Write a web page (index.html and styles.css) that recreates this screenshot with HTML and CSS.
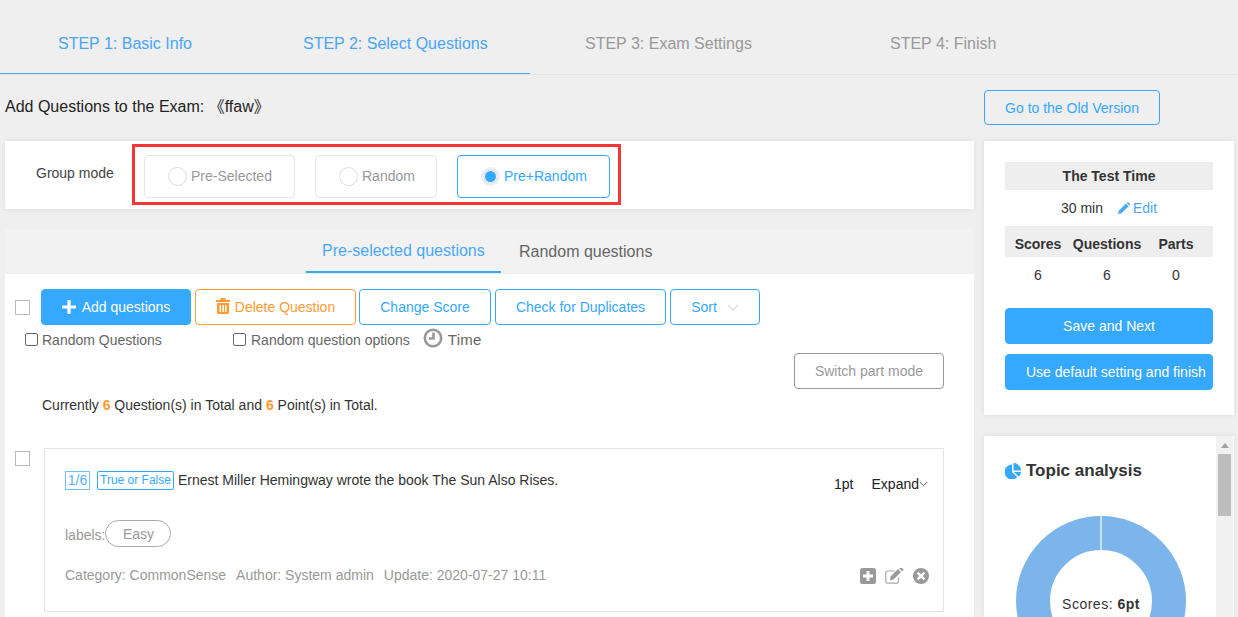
FILE: index.html
```html
<!DOCTYPE html>
<html lang="en">
<head>
<meta charset="utf-8">
<title>Add Questions</title>
<link rel="stylesheet" href="styles.css">
</head>
<body>
<nav class="steps">
  <div class="step step-1 on">STEP 1: Basic Info</div>
  <div class="step step-2 on">STEP 2: Select Questions</div>
  <div class="step step-3">STEP 3: Exam Settings</div>
  <div class="step step-4">STEP 4: Finish</div>
</nav>
<div class="main">
  <div class="left">
    <h1 class="title">Add Questions to the Exam: 《ffaw》</h1>
    <section class="group-card">
      <div class="group-label">Group mode</div>
      <div class="red-box">
        <div class="opt opt-a"><span class="radio"></span>Pre-Selected</div>
        <div class="opt opt-b"><span class="radio"></span>Random</div>
        <div class="opt opt-c active"><span class="radio"></span>Pre+Random</div>
      </div>
    </section>
    <section class="tabs-card">
      <div class="tabs">
        <div class="tab active">Pre-selected questions</div>
        <div class="tab">Random questions</div>
      </div>
      <div class="tab-body">
        <div class="toolbar">
          <span class="box-check"></span>
          <button class="btn primary w-add"><svg class="ic-plus" viewBox="0 0 14 14"><path d="M5.4 0h3.2v5.4H14v3.2H8.6V14H5.4V8.6H0V5.4h5.4z"/></svg>Add questions</button>
          <button class="btn orange w-del"><svg class="ic-trash" viewBox="0 0 14 16"><path d="M5 0h4l1 2h4v2H0V2h4zM1 5h12v9.500c0 .8-.7 1.500-1.500 1.500h-9C1.700 16 1 15.300 1 14.500zm2.500 2v7h1.500V7zm2.800 0v7h1.500V7zm2.700 0v7h1.500V7z"/></svg>Delete Question</button>
          <button class="btn outline w-score">Change Score</button>
          <button class="btn outline w-dup">Check for Duplicates</button>
          <button class="btn outline w-sort">Sort<svg class="ic-sort" viewBox="0 0 12 7"><path d="M1 1l5 5 5-5"/></svg></button>
        </div>
        <div class="checks">
          <label class="check first"><span class="mini"></span>Random Questions</label>
          <label class="check second"><span class="mini"></span>Random question options</label>
          <svg class="ic-clock" viewBox="0 0 20 20"><circle cx="10" cy="10" r="8.200"/><path d="M10.500 4.500v6H6"/></svg>
          <span class="time">Time</span>
        </div>
        <div class="switch-row"><button class="btn grey w-switch">Switch part mode</button></div>
        <p class="summary">Currently <b>6</b> Question(s) in Total and <b>6</b> Point(s) in Total.</p>
        <div class="q-row">
          <span class="box-check q-check"></span>
          <article class="q-box">
            <div class="q-head">
              <div class="q-text"><span class="tag tag-num">1/6</span><span class="tag tag-type">True or False</span>Ernest Miller Hemingway wrote the book The Sun Also Rises.</div>
              <div class="q-side"><span class="pt">1pt</span><span>Expand</span><svg class="ic-exp" viewBox="0 0 9 6"><path d="M.8 1l3.700 3.700L8.200 1"/></svg></div>
            </div>
            <div class="q-labels"><span class="lab">labels:</span><span class="pill">Easy</span></div>
            <div class="q-meta">
              <span class="m1">Category: CommonSense</span><span class="m2">Author: System admin</span><span>Update: 2020-07-27 10:11</span>
              <div class="q-icons">
                <svg class="i16" viewBox="0 0 16 16"><path fill-rule="evenodd" d="M2.500 0h11A2.500 2.500 0 0 1 16 2.500v11a2.500 2.500 0 0 1-2.500 2.500h-11A2.500 2.500 0 0 1 0 13.500v-11A2.500 2.500 0 0 1 2.500 0zM6.500 3v3.500H3v3h3.500V13h3V9.500H13v-3H9.500V3z"/></svg>
                <svg class="i-edit" viewBox="0 0 19 16"><path class="s" d="M13.500 9.500v4a1.700 1.700 0 0 1-1.700 1.700H2.500A1.700 1.700 0 0 1 .8 13.500V4.700A1.700 1.700 0 0 1 2.500 3h7"/><path d="M5.500 8.500L13 1l3 3-7.500 7.500-3.500.7z M14 0l3-.0 1.800 1.800-1.800 1.400z"/></svg>
                <svg class="i16" viewBox="0 0 16 16"><path fill-rule="evenodd" d="M8 0a8 8 0 1 1 0 16A8 8 0 0 1 8 0zM5.400 3.700L3.700 5.400 6.300 8l-2.600 2.600 1.700 1.700L8 9.700l2.600 2.600 1.700-1.700L9.700 8l2.600-2.600-1.700-1.700L8 6.300z"/></svg>
              </div>
            </div>
          </article>
        </div>
      </div>
    </section>
  </div>
  <aside class="right">
    <button class="btn outline go">Go to the Old Version</button>
    <section class="panel info">
      <div class="band band-time">The Test Time</div>
      <div class="time-row"><span class="mins">30 min</span><svg class="ic-pen" viewBox="0 0 13 13"><path d="M0 13l.8-3.600L8.600 1.600l3 3-7.900 7.700zM9.600.6c.6-.6 1.400-.6 2 0l1 1c.6.600.6 1.400 0 2l-.3.300-3-3z"/></svg><span class="edit">Edit</span></div>
      <div class="band band-stats"><span>Scores</span><span>Questions</span><span>Parts</span></div>
      <div class="stats"><span>6</span><span>6</span><span>0</span></div>
      <button class="btn primary wide save">Save and Next</button>
      <button class="btn primary wide finish">Use default setting and finish</button>
    </section>
    <section class="panel topic">
      <div class="topic-main">
        <h2 class="topic-title"><svg class="ic-pie" viewBox="0 0 16 16"><path d="M7 1.500V9l5.300 5.300A7.500 7.500 0 1 1 7 1.500z"/><path d="M8.500 0A7.500 7.500 0 0 1 16 7.500H8.500z"/><path d="M9 9h7a7.500 7.500 0 0 1-2.300 4.700z"/></svg>Topic analysis</h2>
        <div class="donut">
          <svg viewBox="0 0 170 170" class="donut-svg"><circle cx="85" cy="85" r="68" class="ring"/><path d="M85 0v34" class="cut"/></svg>
          <div class="donut-text">Scores: <b>6pt</b></div>
        </div>
      </div>
      <div class="scrollbar"><span class="arrow"></span><span class="thumb"></span></div>
    </section>
  </aside>
</div>
</body>
</html>
```
FILE: styles.css
```css
* { box-sizing: border-box; }
html, body { margin: 0; height: 617px; overflow: hidden; }
body {
  background: #efefef;
  color: #333;
  font: 14px/20px "Liberation Sans", "Noto Sans CJK SC", sans-serif;
}
button { font: inherit; cursor: pointer; }

.steps {
  position: relative;
  display: grid;
  grid-template-columns: 245px 282px 305px 1fr;
  height: 75px;
  border-bottom: 1px solid #e4e4e4;
  font-size: 16px;
  color: #999;
}
.steps::after {
  content: "";
  position: absolute;
  left: 0;
  bottom: 0;
  width: 530px;
  height: 1px;
  background: #48a6f8;
}
.step { padding: 34px 0 0 58px; }
.step.on { color: #48a6f8; }

.main { display: flex; align-items: flex-start; }
.left { width: 969px; margin-left: 5px; }
.right { width: 250px; margin-left: 10px; }

.title {
  margin: 0;
  height: 66px;
  padding-top: 21px;
  font-size: 16px;
  line-height: 22px;
  font-weight: 400;
  color: #222;
}

.group-card {
  display: flex;
  height: 68px;
  margin-bottom: 20px;
  padding: 3px 0 0 31px;
  background: #fff;
  box-shadow: 0 0 6px rgba(0, 0, 0, .08);
}
.group-label { width: 96px; padding-top: 19px; color: #444; }
.red-box {
  display: flex;
  gap: 20px;
  width: 489px;
  height: 61px;
  padding: 8px 0 0 9px;
  border: 3px solid #f53538;
}
.opt {
  display: flex;
  align-items: center;
  height: 43px;
  padding: 0 0 1px 23px;
  border: 1px solid #e6e6e6;
  border-radius: 4px;
  color: #999;
}
.opt-a { width: 151px; }
.opt-b { width: 122px; }
.opt-b .radio { margin-right: 4px; }
.opt-c { width: 153px; }
.radio {
  flex: none;
  width: 19px;
  height: 19px;
  margin-right: 4px;
  border: 1px solid #ddd;
  border-radius: 50%;
  background: #fff;
}
.opt.active { border-color: #35a8ff; color: #35a8ff; }
.opt.active .radio { border: 3px solid #eee; background: #35a8ff; box-shadow: inset 0 0 0 1px #fff; }

.tabs-card { background: #fff; }
.tabs {
  display: flex;
  height: 45px;
  padding-left: 301px;
  background: #f2f2f2;
  border-bottom: 1px solid #eee;
  font-size: 16px;
  color: #666;
}
.tab { height: 44px; margin-right: 18px; }
.tab.active { width: 195px; padding: 12px 0 0 16px; border-bottom: 2px solid #35a8ff; color: #4aa8f8; }
.tab:not(.active) { padding-top: 13px; }

.tab-body { height: 343px; padding-top: 15px; overflow: hidden; }
.toolbar { display: flex; align-items: center; gap: 4px; padding-left: 10px; }
.box-check {
  flex: none;
  width: 15px;
  height: 15px;
  border: 1px solid #bbb;
  background: #fff;
}
.toolbar .box-check { margin-right: 7px; }

.btn {
  display: inline-flex;
  align-items: center;
  justify-content: center;
  height: 36px;
  padding: 0;
  border: 1px solid #35a8ff;
  border-radius: 4px;
  background: transparent;
  color: #35a8ff;
}
.primary { background: #35a8ff; color: #fff; }
.orange { border-color: #ff9a2e; color: #ff9a2e; }
.grey { border-color: #999; color: #999; }
.w-add { width: 150px; }
.w-del { width: 161px; }
.w-score { width: 132px; margin-left: -1px; }
.w-dup { width: 171px; }
.w-sort { width: 90px; }
.w-switch { width: 150px; }
.ic-plus { width: 14px; height: 14px; margin-right: 6px; fill: #fff; }
.ic-trash { width: 14px; height: 16px; margin: -3px 5px 0 0; fill: #ff9a2e; }
.ic-sort { width: 12px; height: 7px; margin-left: 10px; fill: none; stroke: #ddd; stroke-width: 1.300; }

.checks { display: flex; align-items: center; height: 22px; margin-top: 4px; padding-left: 20px; color: #666; }
.check { display: flex; align-items: center; line-height: 22px; }
.check.first { width: 208px; }
.mini {
  width: 13px;
  height: 13px;
  margin: -2px 4px 0 0;
  border: 1px solid #666;
  border-radius: 2px;
  background: #fff;
}
.second .mini { margin-right: 5px; }
.ic-clock { width: 20px; height: 20px; margin: -5px 5px 0 13px; fill: none; stroke: #999; stroke-width: 2.600; }
.time { font-size: 15px; letter-spacing: .3px; }

.switch-row { display: flex; justify-content: flex-end; margin-top: 2px; padding-right: 30px; }
.summary { margin: 6px 0 0; padding-left: 37px; color: #333; }
.summary b { color: #ff9a2e; }

.q-row { display: flex; align-items: flex-start; margin-top: 33px; padding-left: 10px; }
.q-check { margin: 3px 14px 0 0; }
.q-box {
  width: 900px;
  height: 164px;
  padding: 22px 14px 0 20px;
  border: 1px solid #e4e4e4;
}
.q-head { display: flex; justify-content: space-between; height: 49px; }
.q-text { display: flex; align-items: flex-start; color: #333; line-height: 19px; }
.tag {
  height: 19px;
  margin-right: 7px;
  border: 1px solid #35a8ff;
  font-size: 14px;
  line-height: 17px;
  color: #35a8ff;
  text-align: center;
}
.tag-num { width: 25px; border-color: #6fc0ff; color: #5ab0f8; }
.tag-type { width: 77px; margin-right: 4px; border-radius: 2px; font-size: 12px; }
.q-side { display: flex; align-items: center; height: 20px; margin: 3px 1px 0 0; color: #222; }
.pt { margin-right: 18px; }
.ic-exp { width: 9px; height: 6px; fill: none; stroke: #555; stroke-width: 1; }
.q-labels { display: flex; align-items: center; height: 27px; color: #999; }
.lab { margin-top: 2px; }
.pill {
  width: 66px;
  height: 27px;
  border: 1px solid #aaa;
  border-radius: 14px;
  line-height: 26px;
  text-align: center;
}
.q-meta { display: flex; align-items: center; height: 20px; margin-top: 18px; color: #999; }
.m1 { margin-right: 10px; }
.m2 { margin-right: 10px; }
.q-icons { display: flex; align-items: center; gap: 9px; margin-left: auto; padding-top: 2px; fill: #999; }
.i16 { width: 16px; height: 16px; }
.i-edit { width: 19px; height: 16px; }
.i-edit .s { fill: none; stroke: #aaa; stroke-width: 1.200; }

.go { display: flex; width: 176px; height: 35px; margin: 15px 0 16px; background: transparent; }
.panel { background: #fff; box-shadow: 0 0 6px rgba(0, 0, 0, .08); }
.info { height: 274px; margin-bottom: 21px; padding: 21px 21px 0; }
.band { background: #eee; font-weight: 700; color: #333; }
.band-time { height: 28px; line-height: 28px; text-align: center; }
.time-row { display: flex; align-items: center; justify-content: center; height: 36px; }
.mins { margin-right: 15px; }
.ic-pen { width: 12px; height: 12px; margin-right: 3px; fill: #4aa8f8; }
.edit { color: #4aa8f8; }
.band-stats, .stats { display: grid; grid-template-columns: 66px 72px 66px; text-align: center; }
.band-stats { height: 31px; line-height: 36px; }
.stats { height: 36px; line-height: 36px; }
.wide { display: flex; width: 208px; }
.save { margin-top: 15px; }
.finish { justify-content: flex-start; margin-top: 10px; padding-left: 20px; white-space: nowrap; }

.topic { display: flex; height: 181px; overflow: hidden; }
.topic-main { width: 232px; padding: 22px 0 0 21px; }
.topic-title { display: flex; align-items: center; margin: 0; font-size: 17px; line-height: 26px; color: #333; font-weight: 700; }
.ic-pie { width: 16px; height: 16px; margin-right: 5px; fill: #35a8ff; }
.donut { position: relative; width: 170px; height: 170px; margin: 32px 0 0 11px; }
.donut-svg { display: block; width: 170px; height: 170px; }
.ring { fill: none; stroke: #7cb5ec; stroke-width: 34; }
.cut { stroke: #fff; stroke-width: 1.200; }
.donut-text { position: absolute; left: 0; right: 0; top: 78px; text-align: center; letter-spacing: .5px; color: #333; }
.scrollbar { display: flex; flex-direction: column; align-items: center; width: 17px; background: #f1f1f1; }
.arrow { width: 0; height: 0; margin-top: 7px; border: 4px solid transparent; border-top: 0; border-bottom: 5px solid #a3a3a3; }
.thumb { width: 13px; height: 62px; margin-top: 6px; background: #bdbdbd; }
```
